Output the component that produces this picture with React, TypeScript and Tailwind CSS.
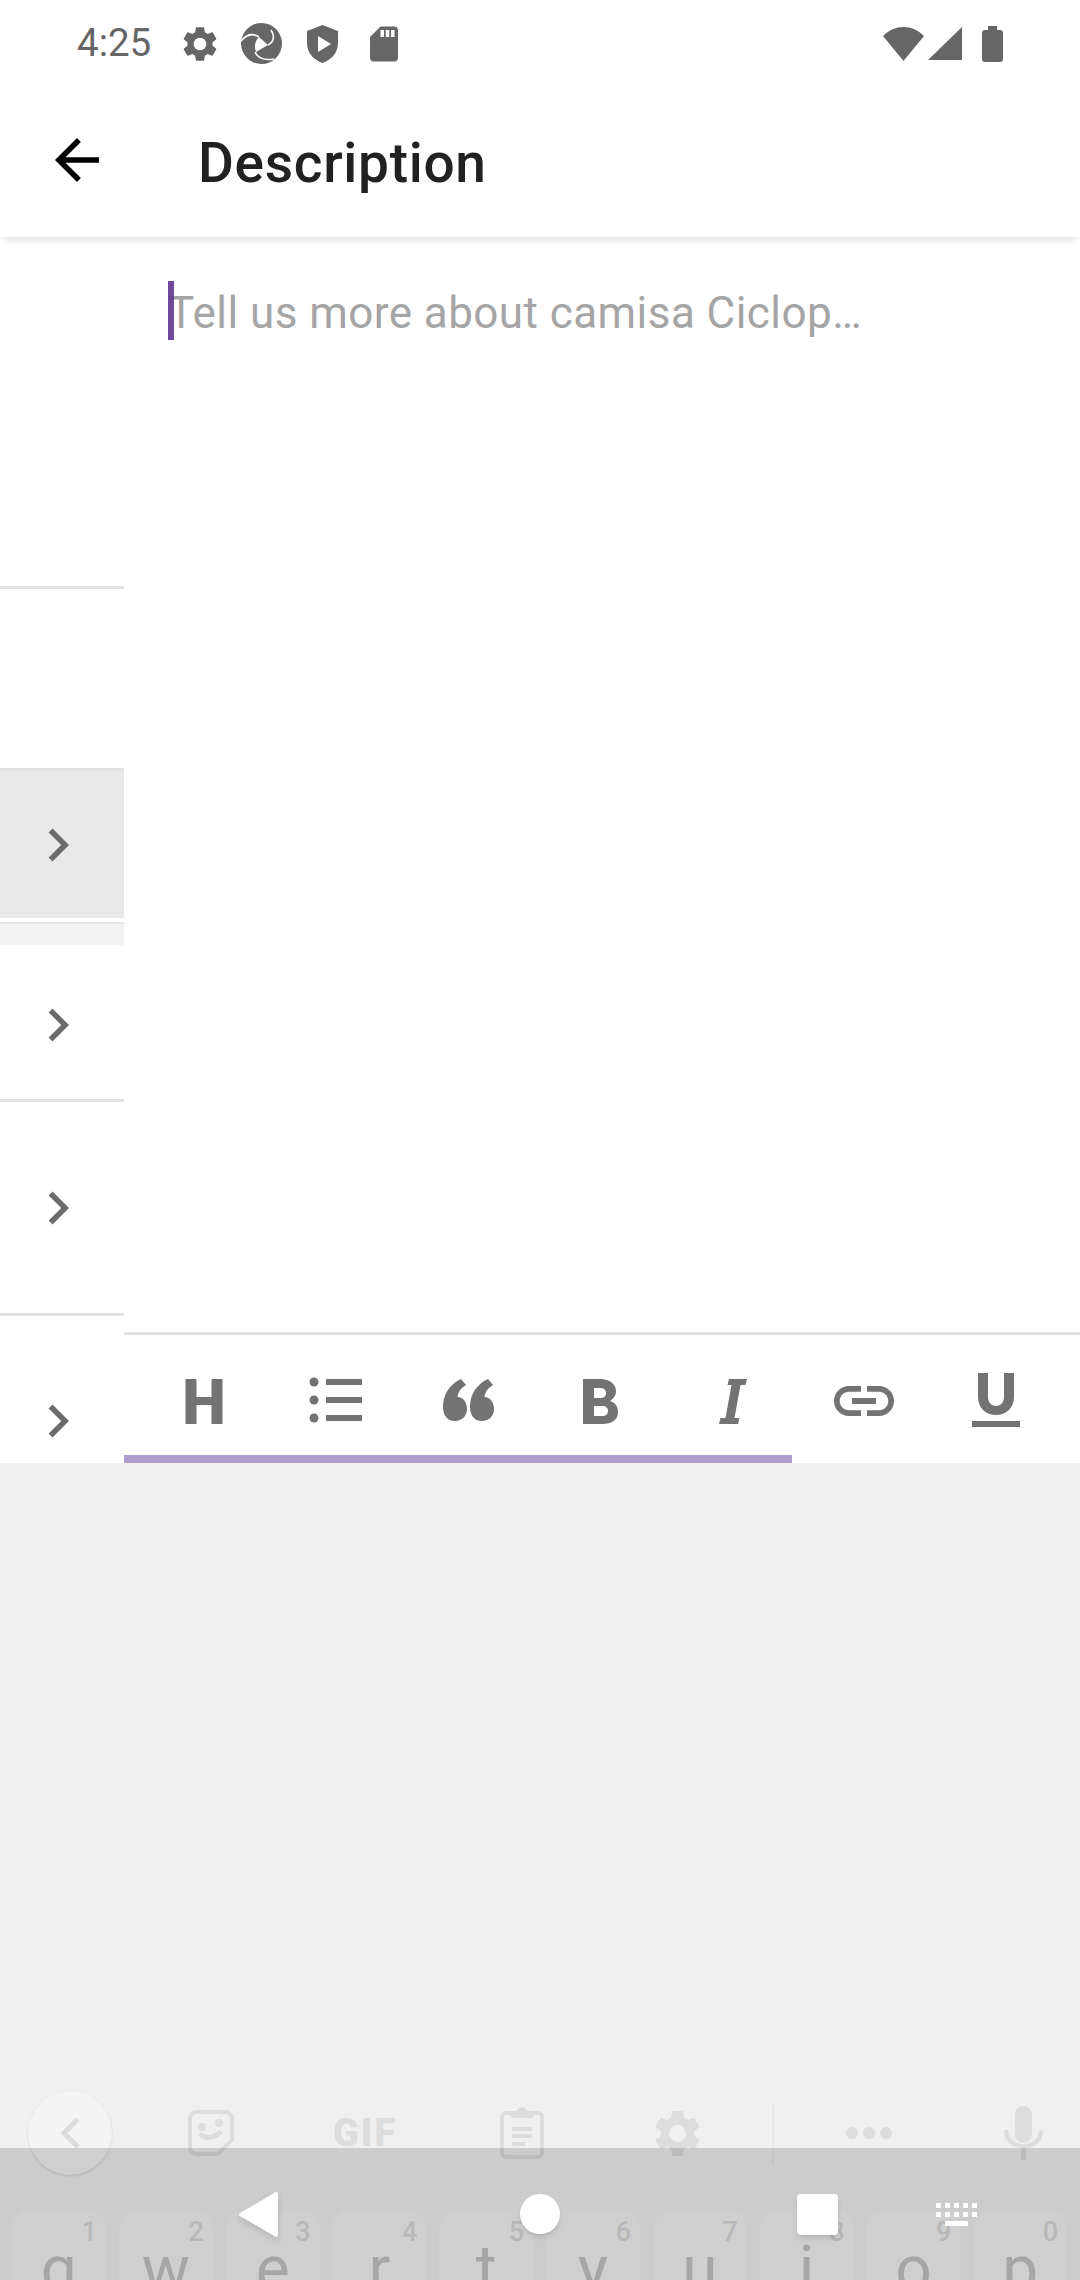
const GEAR =
  "M19.14 12.94c.04-.3.06-.61.06-.94 0-.32-.02-.64-.07-.94l2.03-1.58c.18-.14.23-.41.12-.61l-1.92-3.32c-.12-.22-.37-.29-.59-.22l-2.39.96c-.5-.38-1.03-.7-1.62-.94l-.36-2.54c-.04-.24-.24-.41-.48-.41h-3.84c-.24 0-.43.17-.47.41l-.36 2.54c-.59.24-1.13.57-1.62.94l-2.39-.96c-.22-.08-.47 0-.59.22L2.74 8.87c-.12.21-.08.47.12.61l2.03 1.58c-.05.3-.09.63-.09.94s.02.64.07.94l-2.03 1.58c-.18.14-.23.41-.12.61l1.92 3.32c.12.22.37.29.59.22l2.39-.96c.5.38 1.03.7 1.62.94l.36 2.54c.05.24.24.41.48.41h3.84c.24 0 .44-.17.47-.41l.36-2.54c.59-.24 1.13-.56 1.62-.94l2.39.96c.22.08.47 0 .59-.22l1.92-3.32c.12-.22.07-.47-.12-.61l-2.01-1.58zM12 15.6c-1.98 0-3.6-1.62-3.6-3.6s1.62-3.6 3.6-3.6 3.6 1.62 3.6 3.6-1.62 3.6-3.6 3.6z";
const LINK =
  "M3.9 12c0-1.71 1.39-3.1 3.1-3.1h4V7H7c-2.76 0-5 2.24-5 5s2.24 5 5 5h4v-1.9H7c-1.71 0-3.1-1.39-3.1-3.1zM8 13h8v-2H8v2zm9-6h-4v1.9h4c1.71 0 3.1 1.39 3.1 3.1s-1.39 3.1-3.1 3.1h-4V17h4c2.76 0 5-2.24 5-5s-2.24-5-5-5z";
const QUOTE =
  "M29 14l5 6c-5 3-8 7-8.500 12 5.500 0 9.500 5 9.500 12 0 7-5 12-12 12-8 0-12-6-12-14 0-13 7-23 18-28z";

const Chevron = () => (
  <svg viewBox="0 0 24 24" className="w-[66px] h-[66px] ml-[25px] fill-[#6b6b6b]">
    <path d="M10 6L8.59 7.41 13.17 12l-4.58 4.59L10 18l6-6z" />
  </svg>
);

const toolbarIcons = [
  <path key="h" d="M17.500 14h11v18h15V14h11v45h-11V40h-15v19h-11z" />,
  <g key="list">
    <circle cx="14" cy="17" r="4.500" />
    <circle cx="14" cy="35" r="4.500" />
    <circle cx="14" cy="53" r="4.500" />
    <path d="M26 14h36v6H26zM26 32h36v6H26zM26 50h36v6H26z" />
  </g>,
  <g key="quote">
    <path d={QUOTE} />
    <path d={QUOTE} transform="translate(27 0)" />
  </g>,
  <path
    key="b"
    fillRule="evenodd"
    d="M19 14h17c10 0 16 5 16 12 0 5-3 8-6 10 5 1.500 8 5 8 11 0 8-6 12-16 12H19zM30 23v10h6c4 0 6-2 6-5s-2-5-6-5zM30 41v10h8c4 0 6-2 6-5s-2-5-6-5z"
  />,
  <path key="i" d="M33 14h18l-1.500 6h-5l-6 33h5L42 59H23l1.500-6h5l6-33h-4z" />,
  <path key="link" d={LINK} transform="scale(3)" />,
  <path
    key="u"
    d="M18 8h10v24c0 5 3 9 8 9s8-4 8-9V8h10v24c0 11-8 18-18 18S18 43 18 32zM12 56h48v6H12z"
  />,
];

const keys = [
  ["q", "1"],
  ["w", "2"],
  ["e", "3"],
  ["r", "4"],
  ["t", "5"],
  ["y", "6"],
  ["u", "7"],
  ["i", "8"],
  ["o", "9"],
  ["p", "0"],
];

const StatusBar = () => (
  <div className="h-[87px] flex items-center pl-[77px] pr-[77px] bg-white shrink-0">
    <span className="w-[74px] text-[38.500px] leading-none text-[#666666] whitespace-nowrap">4:25</span>
    <svg viewBox="0 0 24 24" className="w-[42px] h-[42px] ml-[28px] fill-[#666666]">
      <path d={GEAR} />
    </svg>
    {/* shutter app logo */}
    <svg viewBox="0 0 41 41" className="w-[41px] h-[41px] ml-[20px]">
      <circle cx="20.500" cy="20.500" r="20.500" fill="#666666" />
      <path
        d="M0 18C6 11 12 10 18 14M30 7C34 13 33 19 27 22M14 29C16 34 22 38 33 36"
        fill="none"
        stroke="#ffffff"
        strokeWidth="1.600"
      />
      <path d="M18 14L27 22 15 29C13 23 14 18 18 14z" fill="#ffffff" />
    </svg>
    <svg viewBox="0 0 31 38" className="w-[31px] h-[38px] ml-[25px] fill-[#666666]">
      <path
        fillRule="evenodd"
        d="M15.500 0L31 6v12c0 10-7 17-15.500 20C7 35 0 28 0 18V6zM11 11v16l13-8z"
      />
    </svg>
    <svg viewBox="0 0 24 24" className="w-[42px] h-[42px] ml-[25px] fill-[#666666]">
      <path d="M18 2h-8L4.020 8 4 20c0 1.100.9 2 2 2h12c1.100 0 2-.9 2-2V4c0-1.100-.9-2-2-2zm-6 6h-2V4h2v4zm3 0h-2V4h2v4zm3 0h-2V4h2v4z" />
    </svg>
    <div className="ml-auto flex items-center">
      <svg viewBox="0 0 41 34" className="w-[41px] h-[34px] fill-[#666666]">
        <path d="M0 9C6 3 13 0 20.500 0S35 3 41 9L20.500 34z" />
      </svg>
      <svg viewBox="0 0 34 33" className="w-[34px] h-[33px] ml-[4px] fill-[#666666]">
        <path d="M34 0v33H0z" />
      </svg>
      <svg viewBox="0 0 21 36" className="w-[21px] h-[36px] ml-[20px] fill-[#666666]">
        <path d="M6 0h9v4h3c2 0 3 1 3 3v26c0 2-1 3-3 3H3c-2 0-3-1-3-3V7c0-2 1-3 3-3h3z" />
      </svg>
    </div>
  </div>
);

const SideList = () => (
  <div className="w-[124px] shrink-0 flex flex-col bg-white">
    <div className="h-[352px] shrink-0 border-b-[3px] border-[#e2e2e2]" />
    <div className="h-[179px] shrink-0" />
    <div className="h-[150px] shrink-0 bg-[#e9e9e9] border-t-[3px] border-[#e2e2e2] flex items-center">
      <Chevron />
    </div>
    <div className="h-[6px] shrink-0 border-b-[2px] border-[#e4e4e4]" />
    <div className="h-[21px] shrink-0 bg-[#f3f3f3]" />
    <div className="h-[157px] shrink-0 border-b-[3px] border-[#e2e2e2] flex items-center pt-[6px]">
      <Chevron />
    </div>
    <div className="h-[214px] shrink-0 border-b-[3px] border-[#e2e2e2] flex items-center">
      <Chevron />
    </div>
    <div className="flex-1 flex items-start pt-[72px]">
      <Chevron />
    </div>
  </div>
);

const Editor = () => (
  <div className="flex-1 flex flex-col bg-white min-w-0">
    <div className="flex-1 pl-[44px] pt-[44px]">
      <div className="flex items-start">
        <div className="w-[6px] h-[59px] bg-[#5f3590]/90 shrink-0 relative z-10" />
        <p className="-ml-[6px] mt-[3px] text-[44px] leading-[59px] tracking-[0.44px] text-[#a5a5a5] whitespace-nowrap">
          Tell us more about camisa Ciclop…
        </p>
      </div>
    </div>
    <div className="h-[123px] border-t-[3px] border-[#e2e2e2] flex items-center pl-[14px] pt-[12px] shrink-0">
      {toolbarIcons.map((icon, i) => (
        <div key={i} className="w-[132px] flex justify-center">
          <svg viewBox="0 0 72 72" className="w-[72px] h-[72px] fill-[#737373]">
            {icon}
          </svg>
        </div>
      ))}
    </div>
    <div className="h-[8px] w-[668px] bg-[#ae9ecb] shrink-0" />
  </div>
);

const Keyboard = () => (
  <div className="flex-1 flex flex-col justify-end bg-[#f0f0f0] overflow-hidden">
    <div className="h-[84px] flex items-center shrink-0">
      <div className="w-[84px] h-[84px] ml-[28px] rounded-full bg-[#f4f4f4] shadow-sm flex items-center justify-center">
        <svg viewBox="0 0 20 32" className="w-[20px] h-[32px] fill-none stroke-[#dcdddc] stroke-[5]">
          <path d="M18 2L4 16l14 14" />
        </svg>
      </div>
      <svg viewBox="0 0 46 46" className="w-[46px] h-[46px] ml-[76px] fill-none stroke-[#dcdddc] stroke-[4]">
        <path d="M8 2h30c3 0 6 3 6 6v22L30 44H8c-3 0-6-3-6-6V8c0-3 3-6 6-6z" />
        <path d="M12 24c6 6 16 4 21-3" strokeWidth="5" />
        <circle cx="14" cy="17" r="2" />
        <circle cx="31" cy="13" r="2" />
      </svg>
      <span className="w-[64px] ml-[99px] text-[38px] leading-none tracking-[2px] font-black text-[#dcdddc] whitespace-nowrap">
        GIF
      </span>
      <svg viewBox="0 0 44 52" className="w-[44px] h-[52px] ml-[103px] fill-none stroke-[#dcdddc] stroke-[4]">
        <path d="M13 6H6c-2 0-4 2-4 4v36c0 2 2 4 4 4h32c2 0 4-2 4-4V10c0-2-2-4-4-4h-7" />
        <path d="M13 9V6h5c0-5 8-5 8 0h5v3z" fill="#dcdddc" />
        <path d="M12 22h20M12 29h20M12 37h13" />
      </svg>
      <svg viewBox="2 1.500 20 21" className="w-[47px] h-[49px] ml-[110px] fill-[#dcdddc]">
        <path d={GEAR} />
      </svg>
      <div className="w-[2px] h-[61px] ml-[71px] bg-[#e6e7e6]" />
      <div className="ml-[72px] flex gap-[5px]">
        <div className="w-[12px] h-[12px] rounded-full bg-[#dcdddc]" />
        <div className="w-[12px] h-[12px] rounded-full bg-[#dcdddc]" />
        <div className="w-[12px] h-[12px] rounded-full bg-[#dcdddc]" />
      </div>
      <svg viewBox="0 0 39 54" className="w-[39px] h-[54px] ml-[112px] fill-[#dcdddc]">
        <rect x="11" y="0" width="17" height="37" rx="8.500" />
        <path d="M0 24h4c0 9 7 14 15.500 14S35 33 35 24h4c0 11-7 17-17 18v12h-5V42C7 41 0 35 0 24z" />
      </svg>
    </div>
    <div className="h-[70px] mt-[35px] px-[12px] flex gap-[12.800px] shrink-0">
      {keys.map(([letter, digit]) => (
        <div
          key={letter}
          className="w-[94px] h-[110px] shrink-0 rounded-[20px] bg-[#f4f4f4] relative flex justify-center"
        >
          <span className="absolute right-[9px] top-[6px] text-[27px] leading-[32px] font-medium text-[#d9d9d9]">
            {digit}
          </span>
          <span className="text-[64px] leading-[70px] mt-[25px] text-[#c4c4c4]">{letter}</span>
        </div>
      ))}
    </div>
  </div>
);

const NavOverlay = () => (
  <div className="absolute left-0 right-0 bottom-0 h-[132px] bg-black/15 flex items-start">
    <svg viewBox="0 0 39 45" className="w-[39px] h-[45px] ml-[239px] mt-[44px] fill-white drop-shadow-md">
      <path d="M36 .5c1.500-1 3 0 3 2v40c0 2-1.500 3-3 2L1 24c-1.300-.8-1.300-2.200 0-3z" />
    </svg>
    <div className="w-[40px] h-[40px] ml-[242px] mt-[46px] rounded-full bg-white shadow-md" />
    <div className="w-[41px] h-[41px] ml-[237px] mt-[46px] rounded-[4px] bg-white shadow-md" />
    <svg viewBox="0 0 41 23" className="w-[41px] h-[23px] ml-[98px] mt-[55px] fill-white">
      <path d="M0 0h5v5H0zM9 0h5v5H9zM18 0h5v5h-5zM27 0h5v5h-5zM36 0h5v5h-5zM0 9h5v5H0zM9 9h5v5H9zM18 9h5v5h-5zM27 9h5v5h-5zM36 9h5v5h-5zM9 18h23v5H9z" />
    </svg>
  </div>
);

export default function App() {
  return (
    <div className="w-[1080px] h-[2280px] relative overflow-hidden flex flex-col bg-[#f0f0f0] font-['Roboto',sans-serif]">
      <StatusBar />
      {/* app bar */}
      <div className="h-[150px] shrink-0 bg-white flex items-center relative z-10 shadow-[0_6px_8px_-4px_rgba(0,0,0,0.16)]">
        <svg viewBox="0 0 24 24" className="w-[66px] h-[66px] ml-[44px] mb-[4px] fill-black">
          <path d="M20 11H7.830l5.590-5.590L12 4l-8 8 8 8 1.410-1.410L7.830 13H20v-2z" />
        </svg>
        <h1 className="ml-[88px] pt-[3px] text-[55px] leading-none tracking-[0.7px] font-medium text-[#212121] whitespace-nowrap">
          Description
        </h1>
      </div>
      <div className="h-[1226px] shrink-0 flex">
        <SideList />
        <Editor />
      </div>
      <Keyboard />
      <NavOverlay />
    </div>
  );
}
